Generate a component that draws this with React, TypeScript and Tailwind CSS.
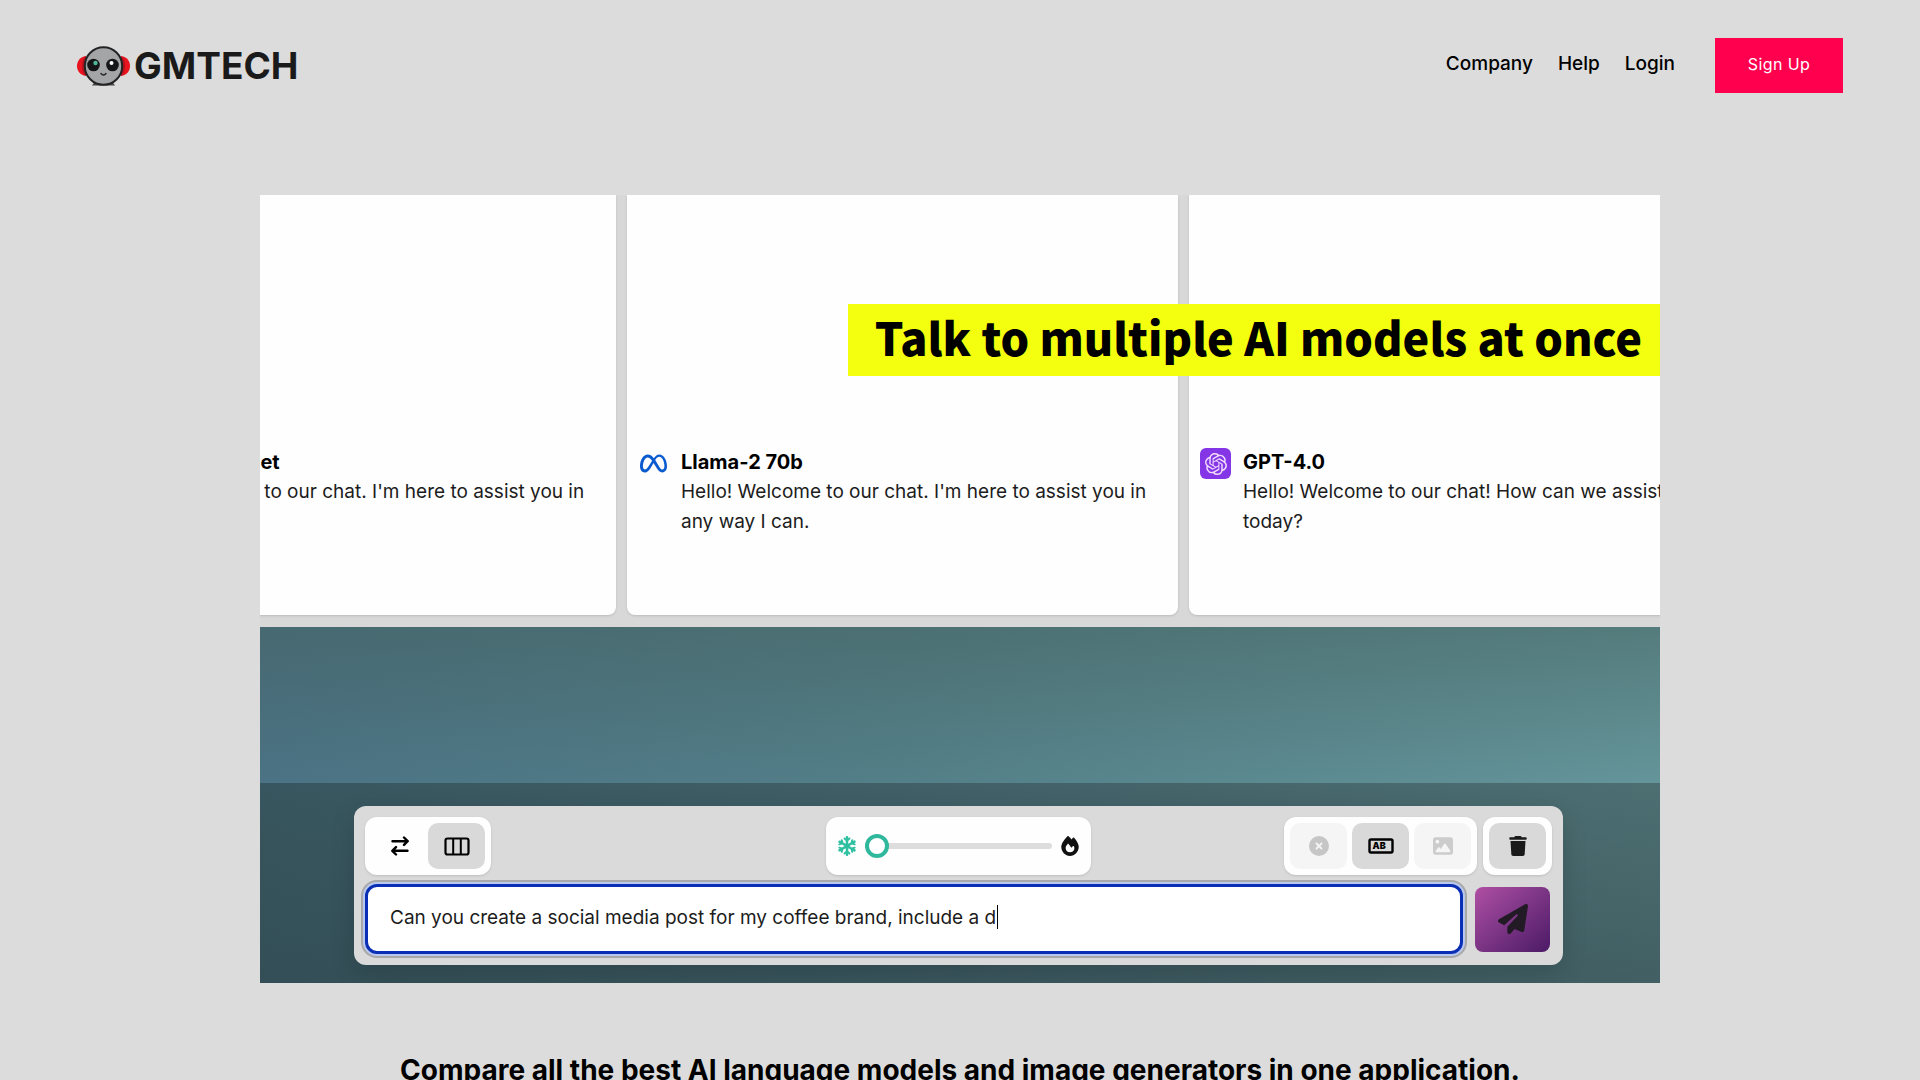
import React from "react";
import {
  FaCircleXmark,
  FaFire,
  FaImage,
  FaMeta,
  FaPaperPlane,
  FaSnowflake,
  FaTrash,
} from "react-icons/fa6";
import { SiOpenai } from "react-icons/si";

function RobotMark() {
  return (
    <svg viewBox="0 0 54 40" className="h-10 w-[54px]" aria-hidden="true">
      <path d="M9 10C3 11 0 15 0 20s3 9 9 10z" fill="#e8141f" />
      <path d="M44 10c6 1 9 5 9 10s-3 9-9 10z" fill="#e8141f" />
      <path d="M9 10c-3 2-4 6-4 10s1 8 4 10z" fill="#b3121c" />
      <path d="M44 10c3 2 4 6 4 10s-1 8-4 10z" fill="#b3121c" />
      <path d="M15 39.500l3-4h17l3 4z" fill="#444" />
      <circle cx="26.500" cy="20" r="18.700" fill="#a3a5a7" stroke="#232323" strokeWidth="2" />
      <circle cx="16.500" cy="19" r="6.300" fill="#161616" />
      <circle cx="35.500" cy="19" r="6.300" fill="#161616" />
      <circle cx="18.500" cy="17" r="2.200" fill="#4fb79a" />
      <circle cx="34.500" cy="17" r="2" fill="#fff" />
      <path d="M24 27.500c1.500 2 3.500 2 5 0" fill="none" stroke="#222" strokeWidth="1.400" strokeLinecap="round" />
    </svg>
  );
}

function SwapIcon() {
  return (
    <svg viewBox="0 0 18 20" className="h-5 w-[18px]" fill="none" stroke="currentColor" strokeWidth="2.400" strokeLinecap="round" strokeLinejoin="round" aria-hidden="true">
      <path d="M1.500 5.200h15M13 1.500l3.700 3.700L13 8.900M16.500 14.800h-15M5 11.100l-3.700 3.700L5 18.500" />
    </svg>
  );
}

function ColumnsIcon() {
  return (
    <svg viewBox="0 0 26 19" className="h-[19px] w-[26px]" fill="none" stroke="currentColor" strokeWidth="2.200" aria-hidden="true">
      <rect x="1.500" y="1.500" width="23" height="16" rx="2" />
      <path d="M9.200 1.500v16M16.800 1.500v16" strokeWidth="2" />
    </svg>
  );
}

function TextFieldIcon() {
  return (
    <svg viewBox="0 0 26 16" className="h-4 w-[26px]" aria-hidden="true">
      <rect x="1.500" y="1.500" width="23" height="13" rx="1.500" fill="none" stroke="currentColor" strokeWidth="2.400" />
      <text x="4.500" y="11.300" fontSize="9" fontWeight="900" fontFamily="Inter, sans-serif" fill="currentColor">
        AB
      </text>
    </svg>
  );
}

function ChatCard({ icon, title, text }: { icon: React.ReactNode; title: string; text: string }) {
  return (
    <article className="flex h-[420px] w-[551px] shrink-0 items-start gap-3 rounded-b-lg bg-[#fefefe] pt-[252px] pr-4 pl-[11px] shadow-sm">
      <div className="mt-px flex size-[31px] shrink-0 items-center justify-center">{icon}</div>
      <div className="text-[19px] leading-[30px] text-[#1c1c1c]">
        <h2 className="text-[20px] font-bold text-black">{title}</h2>
        <p>{text}</p>
      </div>
    </article>
  );
}

function ToolButton({ label, className, children, disabled }: { label: string; className: string; children: React.ReactNode; disabled?: boolean }) {
  return (
    <button type="button" aria-label={label} disabled={disabled} className={"flex h-[46px] w-[57px] items-center justify-center rounded-[10px] " + className}>
      {children}
    </button>
  );
}

function Composer() {
  return (
    <form className="rounded-xl bg-[#dadada] p-[11px] shadow-[0_8px_24px_rgba(0,0,0,0.150)]">
      <div className="grid grid-cols-[1fr_auto_1fr] items-center">
        <div className="flex justify-self-start rounded-xl bg-[#fefefe] p-[6px] shadow">
          <ToolButton label="Swap" className="text-black"><SwapIcon /></ToolButton>
          <ToolButton label="Columns" className="bg-[#d9d9d9] text-black"><ColumnsIcon /></ToolButton>
        </div>
        <div className="flex h-[58px] w-[265px] items-center rounded-xl bg-[#fefefe] px-[11px] shadow">
          <FaSnowflake className="size-5 shrink-0 text-[#2fc0a2]" />
          <input
            type="range"
            aria-label="Temperature"
            min="0"
            max="100"
            defaultValue="0"
            className="mx-2 h-6 min-w-0 flex-1 appearance-none bg-transparent [&::-webkit-slider-runnable-track]:h-[6px] [&::-webkit-slider-runnable-track]:rounded-full [&::-webkit-slider-runnable-track]:bg-[#dddddd] [&::-webkit-slider-thumb]:mt-[-9px] [&::-webkit-slider-thumb]:size-6 [&::-webkit-slider-thumb]:appearance-none [&::-webkit-slider-thumb]:rounded-full [&::-webkit-slider-thumb]:border-4 [&::-webkit-slider-thumb]:border-[#2fb89c] [&::-webkit-slider-thumb]:bg-white"
          />
          <FaFire className="size-5 shrink-0 text-[#111]" />
        </div>
        <div className="flex gap-[6px] justify-self-end">
          <div className="flex gap-[5px] rounded-xl bg-[#fefefe] p-[6px] shadow">
            <ToolButton label="Stop" disabled className="bg-[#f5f5f5] text-[#c6c6c6]"><FaCircleXmark className="size-5" /></ToolButton>
            <ToolButton label="Text" className="bg-[#d9d9d9] text-black"><TextFieldIcon /></ToolButton>
            <ToolButton label="Image" disabled className="bg-[#f5f5f5] text-[#cccccc]"><FaImage className="size-5" /></ToolButton>
          </div>
          <div className="rounded-xl bg-[#fefefe] p-[6px] shadow">
            <ToolButton label="Delete" className="bg-[#d9d9d9] text-[#1a1a1a]"><FaTrash className="size-5" /></ToolButton>
          </div>
        </div>
      </div>
      <div className="mt-[9px] flex items-center gap-3 pr-[2px]">
        <div className="relative flex-1">
          <input
            aria-label="Message"
            defaultValue="Can you create a social media post for my coffee brand, include a d"
            className="h-[70px] w-full rounded-xl border-3 border-[#0a2fb5] bg-white px-[22px] pb-1 text-[19px] text-[#1c1c1c] shadow-[0_0_0_2px_#b9c8ee,0_0_0_4px_#a8a8a8] outline-none"
          />
          <span className="absolute top-[21px] left-[632px] h-6 w-px bg-black" />
        </div>
        <button type="button" aria-label="Send" className="flex h-[65px] w-[75px] items-center justify-center rounded-lg bg-linear-to-br from-[#b04fa4] to-[#4c1a66] text-[#221b26]">
          <FaPaperPlane className="size-[30px]" />
        </button>
      </div>
    </form>
  );
}

export default function App() {
  return (
    <div className="h-screen overflow-hidden bg-[#dcdcdc] font-['Inter',sans-serif] text-black">
      <header className="flex items-start justify-between px-[77px] pt-[38px]">
        <a href="#home" className="flex items-center gap-[3px] pt-2" aria-label="GMTECH home">
          <RobotMark />
          <span className="text-[37px] leading-10 font-bold text-[#1b1a1b]">GMTECH</span>
        </a>
        <div className="flex items-center gap-10">
          <nav className="flex gap-[25px] pb-1 text-[19px] leading-6 font-medium">
            <a href="#company">Company</a>
            <a href="#help">Help</a>
            <a href="#login">Login</a>
          </nav>
          <a href="#signup" className="flex h-[55px] w-32 items-center justify-center bg-[#ff004f] pb-1 text-[16px] tracking-wide text-white">
            Sign Up
          </a>
        </div>
      </header>
      <main className="pt-[102px]">
        <section className="relative mx-auto aspect-video w-full max-w-[1400px] overflow-hidden">
          <div className="flex justify-end bg-[#d8d8d8] pb-3">
            <div className="-mr-20 flex gap-[11px]">
              <ChatCard icon={null} title="Claude 3 Sonnet" text="Hello! Welcome to our chat. I'm here to assist you in" />
              <ChatCard icon={<FaMeta className="size-[27px] text-[#0a5bd0]" />} title="Llama-2 70b" text="Hello! Welcome to our chat. I'm here to assist you in any way I can." />
              <ChatCard
                icon={
                  <span className="flex size-[31px] items-center justify-center rounded-md bg-[#8436e6]">
                    <SiOpenai className="size-[22px] text-[#f3dcff]" />
                  </span>
                }
                title="GPT-4.0"
                text="Hello! Welcome to our chat! How can we assist you today?"
              />
            </div>
          </div>
          <div className="h-[156px] bg-[linear-gradient(180deg,rgba(66,92,88,0.450),rgba(66,92,88,0)),linear-gradient(90deg,#4b7385_0%,#537f88_45%,#64959a_100%)]" />
          <div className="bg-[linear-gradient(180deg,rgba(40,60,66,0),rgba(40,60,66,0.300)),linear-gradient(90deg,#38565f_0%,#405f67_45%,#4d6f72_100%)] pt-[23px] pr-[97px] pb-[18px] pl-[94px]">
            <Composer />
          </div>
          <p className="absolute top-[109px] right-0 flex h-[72px] items-center bg-[#f4ff0f] pr-[18px] pb-[6px] pl-[27px] font-['Noto_Sans_CJK_SC',sans-serif] text-[45px] font-black whitespace-nowrap">
            Talk to multiple AI models at once
          </p>
        </section>
        <h1 className="mt-[69px] text-center text-[28px] leading-9 font-bold whitespace-nowrap">
          Compare all the best AI language models and image generators in one application.
        </h1>
      </main>
    </div>
  );
}
